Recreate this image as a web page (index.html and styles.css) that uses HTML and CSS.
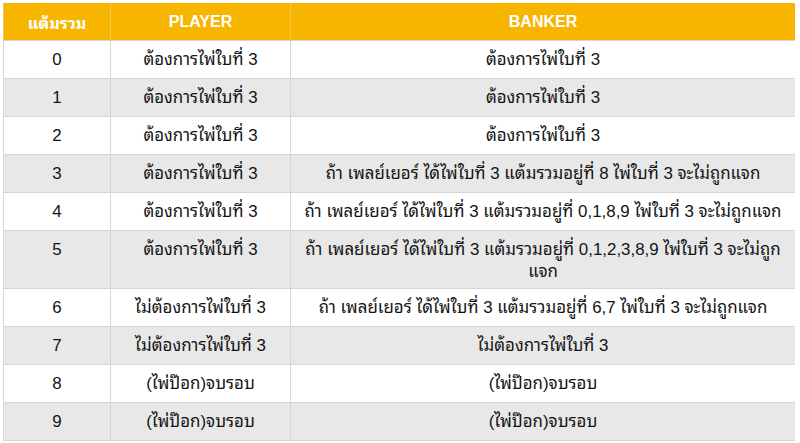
FILE: index.html
```html
<!DOCTYPE html>
<html lang="th">
<head>
<meta charset="utf-8">
<link rel="stylesheet" href="styles.css">
</head>
<body>
<table class="rules">
  <colgroup>
    <col class="c-total">
    <col class="c-player">
    <col class="c-banker">
  </colgroup>
  <thead>
    <tr><th>แต้มรวม</th><th>PLAYER</th><th>BANKER</th></tr>
  </thead>
  <tbody>
    <tr><td>0</td><td>ต้องการไพ่ใบที่ 3</td><td>ต้องการไพ่ใบที่ 3</td></tr>
    <tr><td>1</td><td>ต้องการไพ่ใบที่ 3</td><td>ต้องการไพ่ใบที่ 3</td></tr>
    <tr><td>2</td><td>ต้องการไพ่ใบที่ 3</td><td>ต้องการไพ่ใบที่ 3</td></tr>
    <tr><td>3</td><td>ต้องการไพ่ใบที่ 3</td><td>ถ้า เพลย์เยอร์ ได้ไพ่ใบที่ 3 แต้มรวมอยู่ที่ 8 ไพ่ใบที่ 3 จะไม่ถูกแจก</td></tr>
    <tr><td>4</td><td>ต้องการไพ่ใบที่ 3</td><td>ถ้า เพลย์เยอร์ ได้ไพ่ใบที่ 3 แต้มรวมอยู่ที่ 0,1,8,9 ไพ่ใบที่ 3 จะไม่ถูกแจก</td></tr>
    <tr class="tall"><td>5</td><td>ต้องการไพ่ใบที่ 3</td><td>ถ้า เพลย์เยอร์ ได้ไพ่ใบที่ 3 แต้มรวมอยู่ที่ 0,1,2,3,8,9 ไพ่ใบที่ 3 จะไม่ถูก<br>แจก</td></tr>
    <tr><td>6</td><td>ไม่ต้องการไพ่ใบที่ 3</td><td>ถ้า เพลย์เยอร์ ได้ไพ่ใบที่ 3 แต้มรวมอยู่ที่ 6,7 ไพ่ใบที่ 3 จะไม่ถูกแจก</td></tr>
    <tr><td>7</td><td>ไม่ต้องการไพ่ใบที่ 3</td><td>ไม่ต้องการไพ่ใบที่ 3</td></tr>
    <tr><td>8</td><td>(ไพ่ป๊อก)จบรอบ</td><td>(ไพ่ป๊อก)จบรอบ</td></tr>
    <tr><td>9</td><td>(ไพ่ป๊อก)จบรอบ</td><td>(ไพ่ป๊อก)จบรอบ</td></tr>
  </tbody>
</table>
</body>
</html>
```
FILE: styles.css
```css
html, body {
  background: #ffffff;
}
body {
  margin: 3px 5px 0 3px;
  font-family: "Liberation Sans", "Noto Sans Thai Looped", "Loma", "Garuda", "Waree", "Tlwg Typo", "Noto Sans Thai", "Noto Sans", sans-serif;
  color: #141414;
}
.rules {
  width: 792px;
  border-collapse: collapse;
  table-layout: fixed;
  font-size: 16.9px;
}
.c-total { width: 107px; }
.c-player { width: 180px; }
.c-banker { width: 505px; }
.rules th {
  background: #f7b500;
  color: #ffffff;
  font-weight: bold;
  font-size: 16px;
  height: 37px;
  padding: 0 4px;
  text-align: center;
  border-left: 1px solid #f3c850;
  border-right: 1px solid #f3c850;
}
.rules td {
  height: 37px;
  padding: 0;
  text-align: center;
  vertical-align: middle;
  border: 1px solid #d6d6d6;
  line-height: 22px;
  white-space: nowrap;
}
.rules tbody tr:nth-child(even) td {
  background: #e8e8e8;
}
.rules tr.tall td {
  height: auto;
  vertical-align: top;
  padding: 8px 0 5px;
}
```
